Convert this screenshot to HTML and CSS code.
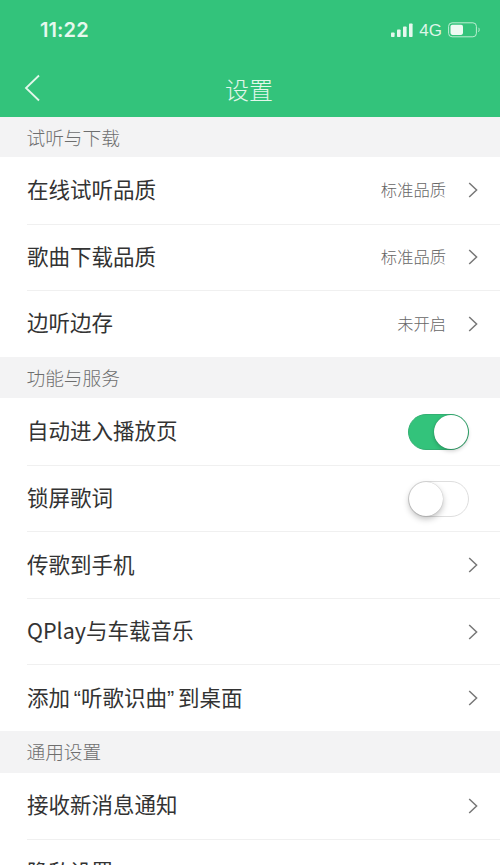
FILE: index.html
```html
<!DOCTYPE html>
<html lang="zh-CN">
<head>
<meta charset="utf-8">
<title>设置</title>
<link rel="stylesheet" href="styles.css">
</head>
<body>
<div class="page">
  <header class="header">
    <div class="status">
      <span class="time">11:22</span>
      <div class="status-right">
        <svg class="signal" width="22" height="15" viewBox="0 0 22 15"><g fill="#e6f8ee"><rect x="0" y="9.500" width="3.600" height="4.500" rx=".8"/><rect x="6" y="6.500" width="3.600" height="7.500" rx=".8"/><rect x="12" y="3.500" width="3.600" height="10.500" rx=".8"/><rect x="18" y="0.500" width="3.600" height="13.500" rx=".8"/></g></svg>
        <span class="net">4G</span>
        <svg class="battery" width="32" height="16" viewBox="0 0 32 16"><rect x=".6" y=".8" width="27.800" height="14" rx="3.500" fill="none" stroke="#bdeed2" stroke-width="1"/><rect x="2.500" y="2.700" width="12.500" height="10.200" rx="1.800" fill="#eefaf3"/><path d="M30.400 5.800c1 .4 1 3.600 0 4" fill="none" stroke="#bdeed2" stroke-width="1"/></svg>
      </div>
    </div>
    <div class="nav">
      <svg class="back" width="16" height="28" viewBox="0 0 16 28"><path d="M15 1.500 2 14l13 12.500" fill="none" stroke="#e3f7eb" stroke-width="1.800"/></svg>
      <h1 class="title">设置</h1>
    </div>
  </header>

  <div class="section section-first"><span class="section-text">试听与下载</span></div>
  <div class="row row-first"><span class="label">在线试听品质</span><span class="value">标准品质</span><svg class="chev" width="10" height="16" viewBox="0 0 10 16"><path d="M1.200 1 8.600 8l-7.400 7" fill="none" stroke="#777" stroke-width="1.500"/></svg></div>
  <div class="row"><span class="label">歌曲下载品质</span><span class="value">标准品质</span><svg class="chev" width="10" height="16" viewBox="0 0 10 16"><path d="M1.200 1 8.600 8l-7.400 7" fill="none" stroke="#777" stroke-width="1.500"/></svg></div>
  <div class="row"><span class="label">边听边存</span><span class="value">未开启</span><svg class="chev" width="10" height="16" viewBox="0 0 10 16"><path d="M1.200 1 8.600 8l-7.400 7" fill="none" stroke="#777" stroke-width="1.500"/></svg></div>

  <div class="section"><span class="section-text">功能与服务</span></div>
  <div class="row row-first"><span class="label">自动进入播放页</span><span class="switch switch-on"><span class="knob"></span></span></div>
  <div class="row"><span class="label">锁屏歌词</span><span class="switch"><span class="knob"></span></span></div>
  <div class="row"><span class="label">传歌到手机</span><svg class="chev" width="10" height="16" viewBox="0 0 10 16"><path d="M1.200 1 8.600 8l-7.400 7" fill="none" stroke="#777" stroke-width="1.500"/></svg></div>
  <div class="row"><span class="label">QPlay与车载音乐</span><svg class="chev" width="10" height="16" viewBox="0 0 10 16"><path d="M1.200 1 8.600 8l-7.400 7" fill="none" stroke="#777" stroke-width="1.500"/></svg></div>
  <div class="row"><span class="label">添加<span class="quote quote-open">“</span>听歌识曲<span class="quote">”</span>到桌面</span><svg class="chev" width="10" height="16" viewBox="0 0 10 16"><path d="M1.200 1 8.600 8l-7.400 7" fill="none" stroke="#777" stroke-width="1.500"/></svg></div>

  <div class="section"><span class="section-text">通用设置</span></div>
  <div class="row row-first"><span class="label">接收新消息通知</span><svg class="chev" width="10" height="16" viewBox="0 0 10 16"><path d="M1.200 1 8.600 8l-7.400 7" fill="none" stroke="#777" stroke-width="1.500"/></svg></div>
  <div class="row"><span class="label">隐私设置</span><svg class="chev" width="10" height="16" viewBox="0 0 10 16"><path d="M1.200 1 8.600 8l-7.400 7" fill="none" stroke="#777" stroke-width="1.500"/></svg></div>
</div>
</body>
</html>
```
FILE: styles.css
```css
* { box-sizing: border-box; }
html, body { margin: 0; padding: 0; height: 100%; overflow: hidden; background: #fff; }
body { font-family: "Noto Sans CJK SC", "Liberation Sans", sans-serif; }
.page { width: 500px; height: 865px; overflow: hidden; }

.header { background: #33c37b; height: 117px; color: #e6f8ee; }
.status { display: flex; justify-content: space-between; align-items: center; height: 62px; padding: 0 20px 2px 40px; }
.time { font: 600 20px/1 "Inter", "Liberation Sans", sans-serif; color: #e6f8ee; letter-spacing: .1px; }
.status-right { display: flex; align-items: center; gap: 6px; }
.net { font: 400 17px/1 "Liberation Sans", sans-serif; color: #def6e8; }
.signal, .battery { display: block; }
.nav { position: relative; height: 55px; display: flex; align-items: center; justify-content: center; }
.back { position: absolute; left: 24px; top: 12px; }
.title { margin: 0; font-size: 24px; font-weight: 300; line-height: 1; color: #e3f7eb; position: relative; top: -1px; left: -1px; }

.section { height: 41.800px; background: #f3f3f4; padding-left: 27px; display: flex; align-items: center; font-size: 18.700px; font-weight: 300; color: #6e6e6e; }
.section-first { height: 40px; }
.section-text { position: relative; top: -1px; left: -0.500px; }

.row { height: 66.500px; margin-left: 27px; padding-right: 22px; display: flex; align-items: center; border-top: 1px solid #f0f0f0; }
.row-first { border-top: 0; }
.label { flex: 1; font-size: 21.500px; font-weight: 400; color: #333; white-space: nowrap; position: relative; top: -2px; }
.quote { font-family: "Liberation Sans", sans-serif; display: inline-block; width: 11px; }
.quote-open { text-align: right; }
.value { font-size: 16.300px; font-weight: 300; color: #666; margin-right: 22px; position: relative; top: -1px; }
.chev { display: block; flex: none; }

.switch { flex: none; position: relative; width: 61px; height: 36px; margin-right: 9px; border-radius: 18px; border: 1px solid #dedede; background: #fff; }
.switch .knob { position: absolute; left: 0; top: 0; width: 34px; height: 34px; border-radius: 50%; background: #fff; box-shadow: 0 3px 6px rgba(0,0,0,.25), 0 0 1px rgba(0,0,0,.3); }
.switch-on { background: #33c37b; border-color: #33b073; }
.switch-on .knob { left: 25px; box-shadow: 0 2px 4px rgba(0,0,0,.2), 0 0 1px rgba(0,0,0,.35); }
```
